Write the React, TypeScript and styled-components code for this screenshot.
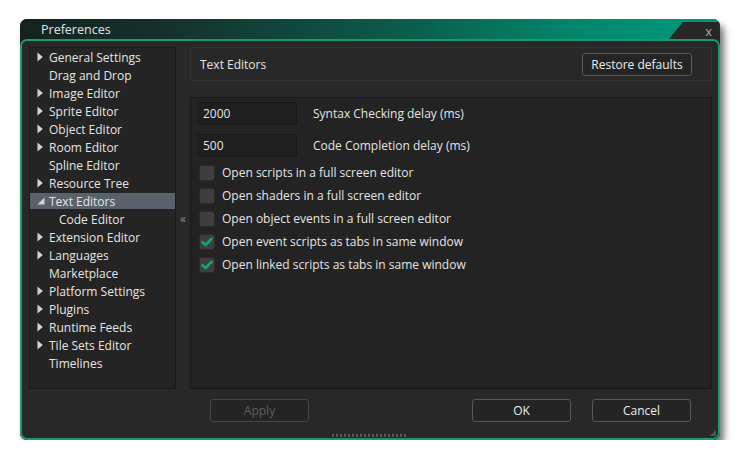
import styled, { createGlobalStyle, css } from 'styled-components';

const GlobalStyle = createGlobalStyle`
  html, body {
    margin: 0;
    padding: 0;
    background: #ffffff;
  }
  body {
    font-family: 'Open Sans', 'Noto Sans', sans-serif;
    font-size: 12px;
    color: #e2e2e2;
  }
`;

type TreeItem = {
  label: string;
  arrow?: 'closed' | 'open';
  child?: boolean;
  selected?: boolean;
};

const treeItems: TreeItem[] = [
  { label: 'General Settings', arrow: 'closed' },
  { label: 'Drag and Drop' },
  { label: 'Image Editor', arrow: 'closed' },
  { label: 'Sprite Editor', arrow: 'closed' },
  { label: 'Object Editor', arrow: 'closed' },
  { label: 'Room Editor', arrow: 'closed' },
  { label: 'Spline Editor' },
  { label: 'Resource Tree', arrow: 'closed' },
  { label: 'Text Editors', arrow: 'open', selected: true },
  { label: 'Code Editor', child: true },
  { label: 'Extension Editor', arrow: 'closed' },
  { label: 'Languages', arrow: 'closed' },
  { label: 'Marketplace' },
  { label: 'Platform Settings', arrow: 'closed' },
  { label: 'Plugins', arrow: 'closed' },
  { label: 'Runtime Feeds', arrow: 'closed' },
  { label: 'Tile Sets Editor', arrow: 'closed' },
  { label: 'Timelines' },
];

const delays = [
  { value: '2000', label: 'Syntax Checking delay (ms)' },
  { value: '500', label: 'Code Completion delay (ms)' },
];

const options = [
  { label: 'Open scripts in a full screen editor', checked: false },
  { label: 'Open shaders in a full screen editor', checked: false },
  { label: 'Open object events in a full screen editor', checked: false },
  { label: 'Open event scripts as tabs in same window', checked: true },
  { label: 'Open linked scripts as tabs in same window', checked: true },
];

const Arrow = ({ kind }: { kind?: TreeItem['arrow'] }) => (
  <ArrowSlot>
    {kind === 'closed' && (
      <svg width="6" height="10" viewBox="0 0 6 10">
        <path d="M0.5 0.5 L5.8 5 L0.5 9.5 Z" fill="#d4d4d4" />
      </svg>
    )}
    {kind === 'open' && (
      <svg width="8" height="8" viewBox="0 0 8 8">
        <path d="M7.5 0.5 L7.5 7.5 L0.5 7.5 Z" fill="#d4d4d4" />
      </svg>
    )}
  </ArrowSlot>
);

const Check = () => (
  <svg width="12" height="10" viewBox="0 0 12 10">
    <path
      d="M1.5 5.2 L4.6 8 L10.5 1.8"
      fill="none"
      stroke="#17a56f"
      strokeWidth="2.6"
      strokeLinecap="round"
      strokeLinejoin="round"
    />
  </svg>
);

const App = () => {
  return (
    <>
      <GlobalStyle />
      <Page>
        <Window>
          <TitleBar>
            <Title>Preferences</Title>
            <CloseTab>
              <CloseGlyph>x</CloseGlyph>
            </CloseTab>
          </TitleBar>
          <Body>
            <Main>
              <Tree>
                {treeItems.map((item) => (
                  <TreeRow key={item.label} selected={item.selected} child={item.child}>
                    <Arrow kind={item.arrow} />
                    {item.label}
                  </TreeRow>
                ))}
              </Tree>
              <Collapse>«</Collapse>
              <RightColumn>
                <Header>
                  <HeaderTitle>Text Editors</HeaderTitle>
                  <Button width={110}>Restore defaults</Button>
                </Header>
                <Content>
                  {delays.map((d) => (
                    <FieldRow key={d.label}>
                      <NumberInput>{d.value}</NumberInput>
                      <FieldLabel>{d.label}</FieldLabel>
                    </FieldRow>
                  ))}
                  <Options>
                    {options.map((o) => (
                      <OptionRow key={o.label}>
                        <Box>{o.checked && <Check />}</Box>
                        {o.label}
                      </OptionRow>
                    ))}
                  </Options>
                </Content>
              </RightColumn>
            </Main>
            <Footer>
              <Button width={99} disabled>
                Apply
              </Button>
              <FooterRight>
                <Button width={99}>OK</Button>
                <Button width={99}>Cancel</Button>
              </FooterRight>
            </Footer>
            <Grip />
            <Corner />
          </Body>
        </Window>
      </Page>
    </>
  );
};

const Page = styled.div`
  padding: 19px 0 0 20px;
`;

const Window = styled.div`
  width: 700px;
  height: 421px;
  border-radius: 7px;
  background: #1e1e1e;
  display: flex;
  flex-direction: column;
  box-shadow: 4px 6px 7px rgba(0, 0, 0, 0.55);
  overflow: hidden;
`;

const TitleBar = styled.div`
  height: 21px;
  flex: none;
  display: flex;
  align-items: stretch;
  background: linear-gradient(90deg, #14221f 0%, #15302b 20%, #0b5c4c 55%, #02876d 80%, #00977a 96%);
`;

const Title = styled.div`
  padding-left: 21px;
  font-size: 12.5px;
  line-height: 22px;
  color: #e4e4e4;
`;

const CloseTab = styled.div`
  margin-left: auto;
  width: 52px;
  margin-top: 3px;
  background: #272727;
  clip-path: polygon(15px 0, 100% 0, 100% 100%, 0 100%);
  display: flex;
  align-items: center;
  justify-content: flex-end;
  padding-right: 8px;
  box-sizing: border-box;
`;

const CloseGlyph = styled.span`
  color: #a8a8a8;
  font-size: 13px;
  line-height: 1;
  margin-top: 0;
`;

const Body = styled.div`
  position: relative;
  flex: 1;
  margin-top: -1px;
  border: 2px solid #1b9a6b;
  border-radius: 7px;
  background: #282828;
  padding: 6px 6px 0 7px;
  display: flex;
  flex-direction: column;
`;

const Main = styled.div`
  display: grid;
  grid-template-columns: 147px 14px 522px;
  height: 342px;
`;

const Tree = styled.div`
  background: #242424;
  border: 1px solid #1a1a1a;
  padding-top: 1px;
  display: flex;
  flex-direction: column;
  gap: 2px;
`;

const TreeRow = styled.div<{ selected?: boolean; child?: boolean }>`
  height: 16px;
  display: flex;
  align-items: center;
  padding-left: ${({ child }) => (child ? '16px' : '6px')};
  white-space: nowrap;
  color: #e4e4e4;
  ${({ selected }) =>
    selected &&
    css`
      background: #59626b;
    `}
`;

const ArrowSlot = styled.span`
  width: 12px;
  display: flex;
  align-items: center;
  justify-content: flex-start;
  padding-left: 1px;
`;

const Collapse = styled.div`
  color: #8a8a8a;
  font-size: 12px;
  display: flex;
  justify-content: center;
  padding-top: 163px;
`;

const RightColumn = styled.div`
  display: flex;
  flex-direction: column;
  gap: 16px;
`;

const Header = styled.div`
  height: 34px;
  box-sizing: border-box;
  border: 1px solid #333333;
  border-radius: 2px;
  display: flex;
  align-items: center;
  justify-content: space-between;
  padding: 0 19px 0 9px;
`;

const HeaderTitle = styled.span`
  color: #e4e4e4;
`;

const Button = styled.button<{ width: number }>`
  width: ${({ width }) => width}px;
  height: 23px;
  box-sizing: border-box;
  background: #242424;
  border: 1px solid #585858;
  border-radius: 3px;
  color: #ececec;
  font-family: inherit;
  font-size: 12px;
  padding: 0;
  &:disabled {
    color: #5e5e5e;
    border-color: #474747;
  }
`;

const Content = styled.div`
  flex: 1;
  background: #232323;
  border: 1px solid #1a1a1a;
  padding: 4px 8px 0 7px;
`;

const FieldRow = styled.div`
  display: flex;
  align-items: center;
  gap: 16px;
  margin-bottom: 9px;
`;

const NumberInput = styled.div`
  width: 99px;
  height: 23px;
  box-sizing: border-box;
  background: #1f1f1f;
  border: 1px solid #191919;
  border-radius: 2px;
  padding-left: 4px;
  display: flex;
  align-items: center;
  color: #e4e4e4;
`;

const FieldLabel = styled.span`
  color: #e4e4e4;
`;

const Options = styled.div`
  margin-top: -5px;
  display: flex;
  flex-direction: column;
`;

const OptionRow = styled.div`
  height: 23px;
  display: flex;
  align-items: center;
  gap: 7px;
  padding-left: 1px;
  color: #e4e4e4;
`;

const Box = styled.span`
  width: 16px;
  height: 16px;
  box-sizing: border-box;
  background: #3e3e3e;
  border: 1px solid #2c2c2c;
  border-radius: 3px;
  display: flex;
  align-items: center;
  justify-content: center;
`;

const Footer = styled.div`
  display: flex;
  align-items: center;
  padding: 10px 21px 0 181px;
`;

const FooterRight = styled.div`
  margin-left: auto;
  display: flex;
  gap: 21px;
`;

const Grip = styled.div`
  position: absolute;
  left: 310px;
  bottom: 1px;
  width: 76px;
  height: 3px;
  background-image: repeating-linear-gradient(90deg, #555 0 2px, transparent 2px 4px);
`;

const Corner = styled.div`
  position: absolute;
  right: 2px;
  bottom: 2px;
  width: 6px;
  height: 6px;
  background-image: radial-gradient(circle, #555 0.8px, transparent 1px);
  background-size: 2px 2px;
  clip-path: polygon(100% 0, 100% 100%, 0 100%);
`;

export default App;
